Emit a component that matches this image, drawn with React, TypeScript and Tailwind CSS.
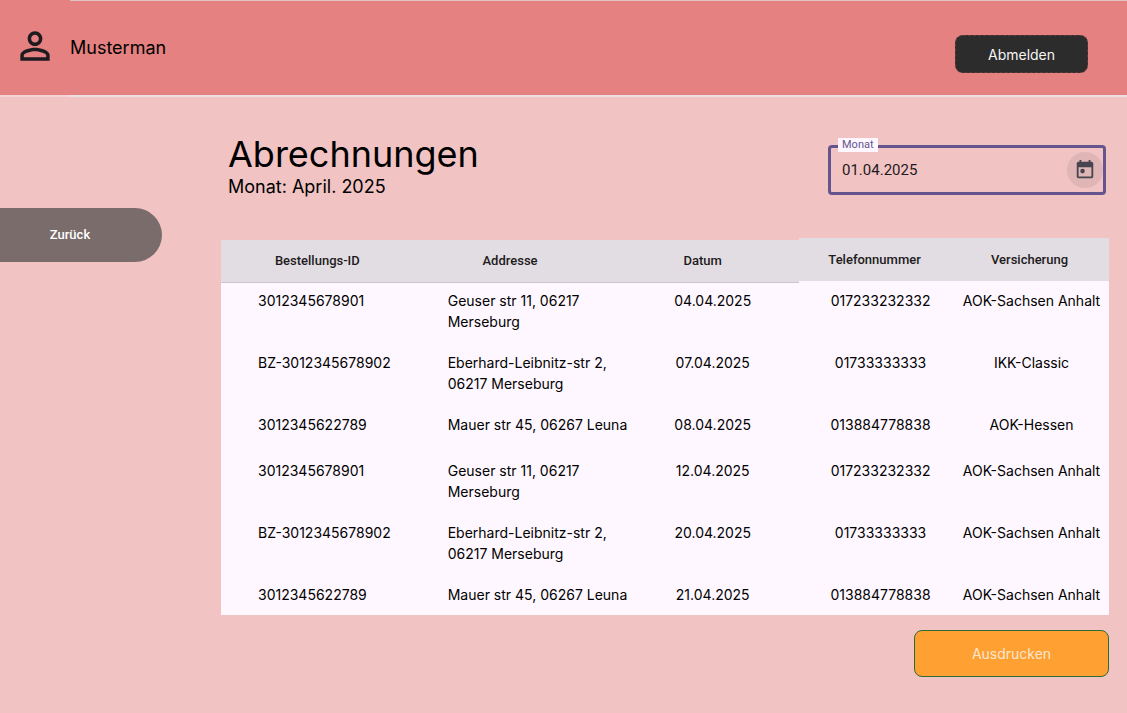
import React from "react";

type Entry = {
  id: string;
  address: string[];
  date: string;
  phone: string;
  insurance: string;
};

const entries: Entry[] = [
  { id: "3012345678901", address: ["Geuser str 11, 06217", "Merseburg"], date: "04.04.2025", phone: "017233232332", insurance: "AOK-Sachsen Anhalt" },
  { id: "BZ-3012345678902", address: ["Eberhard-Leibnitz-str 2,", "06217 Merseburg"], date: "07.04.2025", phone: "01733333333", insurance: "IKK-Classic" },
  { id: "3012345622789", address: ["Mauer str 45, 06267 Leuna"], date: "08.04.2025", phone: "013884778838", insurance: "AOK-Hessen" },
  { id: "3012345678901", address: ["Geuser str 11, 06217", "Merseburg"], date: "12.04.2025", phone: "017233232332", insurance: "AOK-Sachsen Anhalt" },
  { id: "BZ-3012345678902", address: ["Eberhard-Leibnitz-str 2,", "06217 Merseburg"], date: "20.04.2025", phone: "01733333333", insurance: "AOK-Sachsen Anhalt" },
  { id: "3012345622789", address: ["Mauer str 45, 06267 Leuna"], date: "21.04.2025", phone: "013884778838", insurance: "AOK-Sachsen Anhalt" },
];

function PersonIcon() {
  return (
    <svg viewBox="0 0 24 24" className="size-11" fill="#1d1b20" aria-hidden="true">
      <path d="M12 5.9c1.16 0 2.1.94 2.1 2.1s-.94 2.1-2.1 2.1S9.9 9.16 9.9 8s.94-2.1 2.1-2.1m0 9c2.97 0 6.1 1.46 6.1 2.1v1.1H5.9V17c0-.64 3.13-2.1 6.1-2.1M12 4C9.79 4 8 5.79 8 8s1.79 4 4 4 4-1.79 4-4-1.79-4-4-4zm0 9c-2.67 0-8 1.34-8 4v3h16v-3c0-2.66-5.33-4-8-4z" />
    </svg>
  );
}

function CalendarIcon() {
  return (
    <svg viewBox="0 0 24 24" className="size-[22px]" fill="#49454f" aria-hidden="true">
      <path d="M19 3h-1V1h-2v2H8V1H6v2H5c-1.1 0-2 .9-2 2v14c0 1.1.9 2 2 2h14c1.1 0 2-.9 2-2V5c0-1.1-.9-2-2-2zm0 16H5V9h14v10z" />
      <circle cx="9.3" cy="13.2" r="2.5" />
    </svg>
  );
}

function TopBar() {
  return (
    <header className="flex h-[97px] bg-[#e58180]">
      <div className="flex w-[70px] items-center justify-center border-b-2 border-[#f3d3d3] pb-[3px]">
        <PersonIcon />
      </div>
      <div className="flex flex-1 items-center justify-between border-t border-b-2 border-t-[#dfc3c3] border-b-[#ede0e0] pr-[39px]">
        <span className="text-[18px] leading-6">Musterman</span>
        <button className="mt-3 h-[38px] w-[133px] rounded-lg border border-dashed border-[#5c3a3a] bg-[#2c2c2c] text-[14px] text-[#f5f5f5]">
          Abmelden
        </button>
      </div>
    </header>
  );
}

function MonthField() {
  return (
    <div className="relative mt-[14px] flex h-[50px] w-[278px] items-center justify-between rounded border-3 border-[#65558f] pl-[11px]">
      <label htmlFor="month" className="absolute -top-[10px] left-[7px] bg-[#fef7ff] px-1 font-[Roboto] text-[11px] leading-[14px] text-[#65558f]">
        Monat
      </label>
      <input id="month" type="text" defaultValue="01.04.2025" className="w-40 min-w-0 bg-transparent font-[Roboto] text-[15px] text-[#1d1b20] outline-none" />
      <button aria-label="Kalender öffnen" className="flex size-9 items-center justify-center rounded-full bg-[#dfb5b6]">
        <CalendarIcon />
      </button>
    </div>
  );
}

const leftHead = "border-t-2 border-b border-t-[#f2c3c3] border-b-[#cbc6cd] bg-[#e2dde3] font-medium";
const rightHead = "border-b-2 border-[#fef7ff] bg-[#e2dde3] pr-1 font-medium";

function BillingTable() {
  return (
    <table className="w-full table-fixed border-separate border-spacing-0">
      <colgroup>
        <col className="w-[21.7%]" />
        <col className="w-[21.7%]" />
        <col className="w-[21.7%]" />
        <col />
        <col />
      </colgroup>
      <thead>
        <tr className="h-[45px] font-[Roboto] text-[13px] text-[#1d1b20]">
          <th className={leftHead}>Bestellungs-ID</th>
          <th className={leftHead}>Addresse</th>
          <th className={leftHead}>Datum</th>
          <th className={rightHead}>Telefonnummer</th>
          <th className={rightHead}>Versicherung</th>
        </tr>
      </thead>
      <tbody className="bg-[#fef7ff] text-[14px] leading-[21px] whitespace-nowrap">
        {entries.map((entry, index) => (
          <tr key={index} className="h-[46px] align-top last:h-[38px]">
            <td className="pt-[7px] pl-[37px]">{entry.id}</td>
            <td className={entry.address.length > 1 ? "pt-[7px] pb-[13px] pl-[34px]" : "pt-[7px] pl-[34px]"}>
              {entry.address.map((line) => (
                <div key={line}>{line}</div>
              ))}
            </td>
            <td className="pt-[7px] pl-5 text-center">{entry.date}</td>
            <td className="pt-[7px] pl-2 text-center">{entry.phone}</td>
            <td className="pt-[7px] text-center">{entry.insurance}</td>
          </tr>
        ))}
      </tbody>
    </table>
  );
}

export default function App() {
  return (
    <div className="min-h-screen bg-[#f2c3c3] font-[Inter,sans-serif] text-black">
      <TopBar />
      <div className="flex">
        <aside className="w-[221px] shrink-0 pt-[111px]">
          <button className="h-[54px] w-[162px] rounded-r-full bg-[#796c6b] pr-[22px] font-[Roboto] text-[13px] font-medium text-white">
            Zurück
          </button>
        </aside>
        <main className="flex min-w-0 flex-1 flex-col pt-[34px] pr-[18px]">
          <div className="flex items-start justify-between pr-[3px] pb-[37px] pl-[7px]">
            <div className="pt-[3px] pb-px">
              <h1 className="text-[36px] leading-[40px]">Abrechnungen</h1>
              <p className="text-[18px] leading-[26px]">Monat: April. 2025</p>
            </div>
            <MonthField />
          </div>
          <BillingTable />
          <button className="mt-[15px] h-[47px] w-[195px] self-end rounded-lg border border-[#2f6b35] bg-[#fea032] text-[14px] text-[#fbe6d0]">
            Ausdrucken
          </button>
        </main>
      </div>
    </div>
  );
}
